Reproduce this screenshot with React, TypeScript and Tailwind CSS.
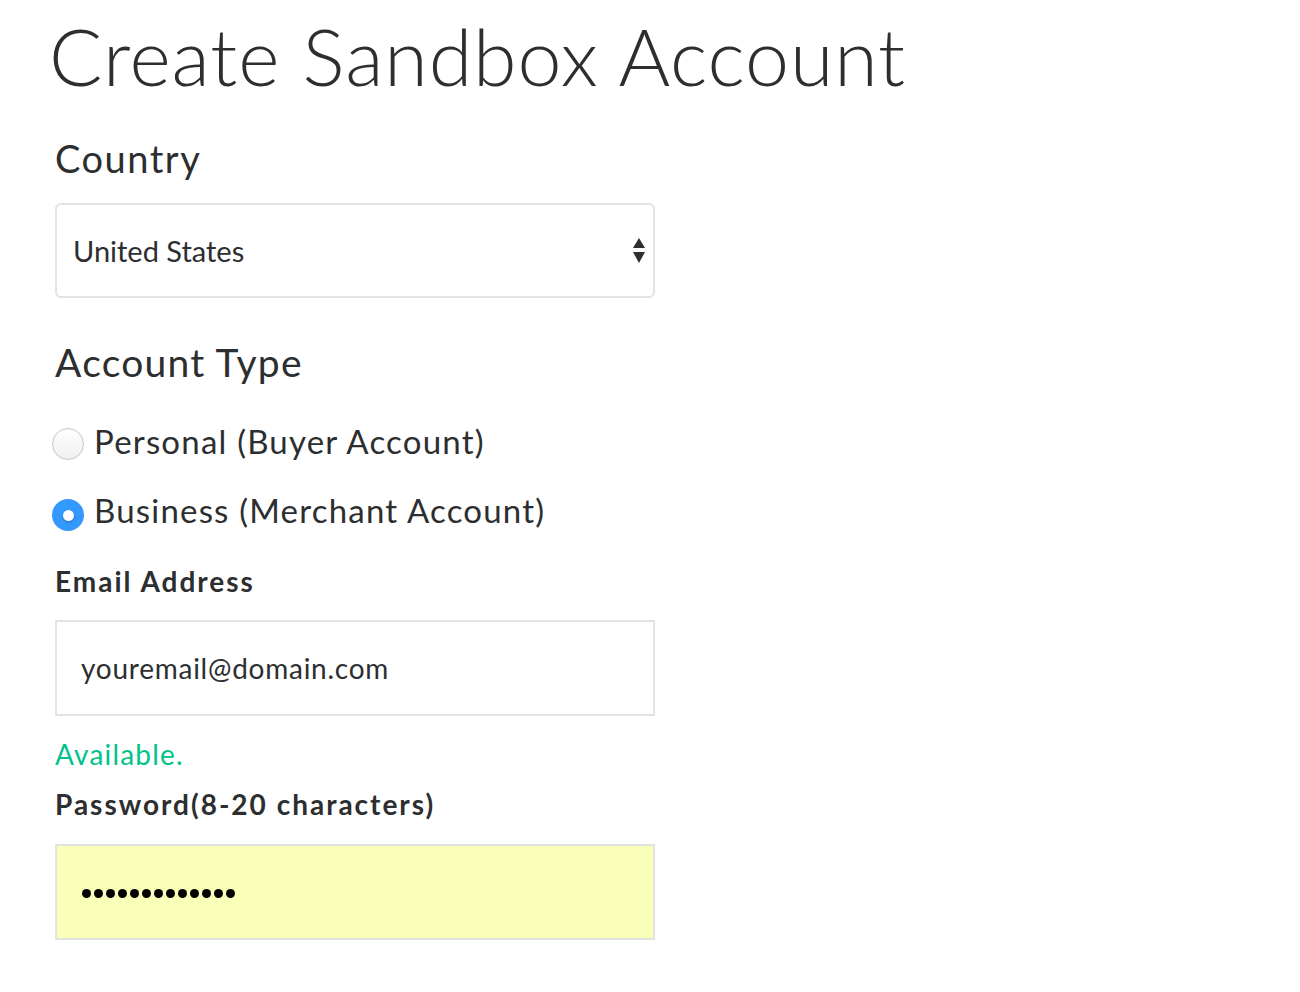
import React from "react";

function Dots() {
  return (
    <div className="flex gap-[3px]">
      {Array.from({ length: 13 }).map((_, i) => (
        <div key={i} className="h-[9px] w-[9px] rounded-full bg-black" />
      ))}
    </div>
  );
}

export default function App() {
  return (
    <div className="min-h-[992px] w-[1300px] bg-white text-[#2c2e2f]" style={{ fontFamily: "Lato, 'Open Sans', sans-serif" }}>
      <div className="pl-[55px] pt-[10px]">
        <h1 className="ml-[-6px] text-[79px] font-light leading-[92px] tracking-[0.9px]">Create Sandbox Account</h1>

        <div className="mt-[33px] text-[38px] leading-[46px] tracking-[1.5px]">Country</div>
        <div className="mt-[22px] flex h-[95px] w-[600px] items-center justify-between rounded-[6px] border-2 border-[#e2e2e2] pl-[16px] pr-[8px]">
          <span className="text-[29px] leading-[35px]">United States</span>
          <svg width="12" height="26" viewBox="0 0 12 26">
            <path d="M6 0 L12 10 L0 10 Z" fill="#2c2e2f" />
            <path d="M0 14 L12 14 L6 25 Z" fill="#2c2e2f" />
          </svg>
        </div>

        <div className="mt-[41px] text-[39px] leading-[46px] tracking-[1.25px]">Account Type</div>

        <div className="mt-[36px] ml-[-3px] flex items-start gap-[10px]">
          <div className="mt-[7px] h-[32px] w-[32px] shrink-0 rounded-full border border-[#c4c4c4] bg-gradient-to-b from-white to-[#efefef]" />
          <span className="text-[33px] leading-[40px] tracking-[1.2px]">Personal (Buyer Account)</span>
        </div>
        <div className="mt-[29px] ml-[-3px] flex items-start gap-[10px]">
          <div className="mt-[9px] flex h-[32px] w-[32px] shrink-0 items-center justify-center rounded-full bg-[#3399ff]">
            <div className="h-[11px] w-[11px] rounded-full bg-white shadow-[0_1px_2px_rgba(0,0,0,0.3)]" />
          </div>
          <span className="text-[33px] leading-[40px] tracking-[1.2px]">Business (Merchant Account)</span>
        </div>

        <div className="mt-[32px] text-[28px] font-bold leading-[36px] tracking-[2px]">Email Address</div>
        <div className="mt-[21px] flex h-[96px] w-[600px] items-center border-2 border-[#e2e2e2] pl-[24px]">
          <span className="text-[28px] leading-[34px] tracking-[0.75px]">youremail@domain.com</span>
        </div>

        <div className="mt-[20px] text-[28px] leading-[36px] tracking-[1.2px] text-[#00c389]">Available.</div>
        <div className="mt-[14px] text-[28px] font-bold leading-[36px] tracking-[2px]">Password(8-20 characters)</div>
        <div className="mt-[22px] flex h-[96px] w-[600px] items-center border-2 border-[#e2e2e2] bg-[#f9feb8] pl-[25px] pt-[3px]">
          <Dots />
        </div>
      </div>
    </div>
  );
}
